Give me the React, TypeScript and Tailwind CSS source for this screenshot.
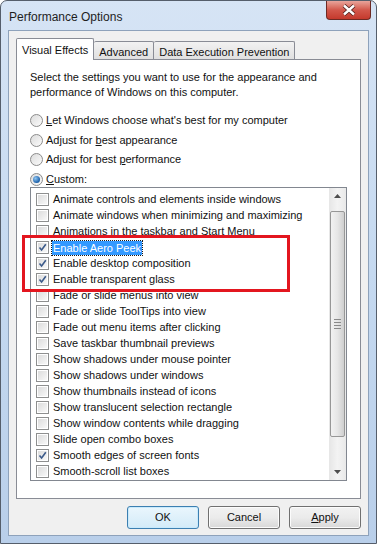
import React from "react";

const FONT = { fontFamily: '"Liberation Sans", Arial, sans-serif' };

const effects: { label: string; checked?: boolean; selected?: boolean }[] = [
  { label: "Animate controls and elements inside windows" },
  { label: "Animate windows when minimizing and maximizing" },
  { label: "Animations in the taskbar and Start Menu" },
  { label: "Enable Aero Peek", checked: true, selected: true },
  { label: "Enable desktop composition", checked: true },
  { label: "Enable transparent glass", checked: true },
  { label: "Fade or slide menus into view" },
  { label: "Fade or slide ToolTips into view" },
  { label: "Fade out menu items after clicking" },
  { label: "Save taskbar thumbnail previews" },
  { label: "Show shadows under mouse pointer" },
  { label: "Show shadows under windows" },
  { label: "Show thumbnails instead of icons" },
  { label: "Show translucent selection rectangle" },
  { label: "Show window contents while dragging" },
  { label: "Slide open combo boxes" },
  { label: "Smooth edges of screen fonts", checked: true },
  { label: "Smooth-scroll list boxes" },
];

function Radio({ on }: { on?: boolean }) {
  return (
    <span className="w-[13px] h-[13px] rounded-full border border-[#8b8b8b] bg-gradient-to-br from-[#dcdcdc] to-[#fbfbfb] flex items-center justify-center shrink-0">
      {on && (
        <span className="w-[7px] h-[7px] rounded-full bg-[radial-gradient(circle_at_35%_35%,#8fc6f3,#1b5fa8_70%)]" />
      )}
    </span>
  );
}

function Check({ on }: { on?: boolean }) {
  return (
    <span className="w-[13px] h-[13px] border border-[#8e8f8f] bg-white p-[1px] shrink-0">
      <span className="block w-full h-full bg-gradient-to-br from-[#dcdcdc] to-[#f8f8f8] relative">
        {on && (
          <svg viewBox="0 0 9 9" className="absolute inset-0 w-[9px] h-[9px]">
            <path d="M1.5 4.5 L3.6 7 L7.8 1.2" fill="none" stroke="#3b5a8a" strokeWidth="1.6" />
          </svg>
        )}
      </span>
    </span>
  );
}

function Btn({ children, primary }: { children: React.ReactNode; primary?: boolean }) {
  return (
    <div
      className={`w-[72px] h-[23px] rounded-[3px] border flex items-center justify-center text-[11px] text-[#111] ${
        primary
          ? "border-[#3c7fb1] bg-gradient-to-b from-[#eaf6fd] to-[#d3ebf8] shadow-[inset_0_0_0_1px_#c9eafc]"
          : "border-[#707070] bg-gradient-to-b from-[#f2f2f2] via-[#ebebeb] to-[#d8d8d8] shadow-[inset_0_0_0_1px_#fcfcfc]"
      }`}
    >
      {children}
    </div>
  );
}

export default function App() {
  return (
    <div className="w-[380px] h-[544px] bg-white" style={FONT}>
      <div className="relative w-[377px] h-[544px] flex flex-col rounded-t-[7px] border border-[#555e6b] bg-gradient-to-b from-[#d6e4f5] via-[#c5d9f0] to-[#b9cfea]">
        {/* Title bar */}
        <div className="h-[29px] flex items-start justify-between pl-[8px] pr-[5px]">
          <span className="mt-[7px] text-[12px] text-[#1e1e1e]">Performance Options</span>
          <div className="w-[45px] h-[19px] rounded-b-[4px] border border-t-0 border-[#6d2a24] bg-gradient-to-b from-[#e8a49b] via-[#d2574b] to-[#c4392c] flex items-center justify-center">
            <svg viewBox="0 0 14 12" className="w-[14px] h-[12px]">
              <path d="M2 1.5 L12 10.5 M12 1.5 L2 10.5" stroke="#4a1c18" strokeWidth="4" />
              <path d="M2 1.5 L12 10.5 M12 1.5 L2 10.5" stroke="#ffffff" strokeWidth="2.4" />
            </svg>
          </div>
        </div>

        {/* Client */}
        <div className="flex-1 mx-[7px] mb-[7px] bg-[#f0f0f0] border border-[#8ea2bb] px-[7px] pt-[7px] flex flex-col">
          {/* Tabs */}
          <div className="flex items-end h-[21px] text-[11px] text-[#111] relative z-10">
            <div className="h-[22px] -mb-px px-[5px] pt-[3px] bg-white border border-b-0 border-[#898c95] rounded-t-[2px]">
              Visual Effects
            </div>
            <div className="h-[18px] px-[5px] pt-[2px] bg-gradient-to-b from-[#f2f2f2] to-[#e0e0e0] border border-l-0 border-b-0 border-[#898c95] rounded-t-[2px]">
              Advanced
            </div>
            <div className="h-[18px] px-[5px] pt-[2px] bg-gradient-to-b from-[#f2f2f2] to-[#e0e0e0] border border-l-0 border-b-0 border-[#898c95] rounded-t-[2px]">
              Data Execution Prevention
            </div>
          </div>

          {/* Panel */}
          <div className="h-[440px] bg-white border border-[#898c95] px-[13px] pt-[10px] text-[11px] text-[#111]">
            <p className="leading-[15px]">
              Select the settings you want to use for the appearance and
              <br />
              performance of Windows on this computer.
            </p>

            <div className="mt-[14px] flex flex-col gap-[6.5px]">
              <label className="flex items-center gap-[3px] h-[13px]">
                <Radio />
                <span>
                  <u>L</u>et Windows choose what's best for my computer
                </span>
              </label>
              <label className="flex items-center gap-[3px] h-[13px]">
                <Radio />
                <span>
                  Adjust for <u>b</u>est appearance
                </span>
              </label>
              <label className="flex items-center gap-[3px] h-[13px]">
                <Radio />
                <span>
                  Adjust for best <u>p</u>erformance
                </span>
              </label>
              <label className="flex items-center gap-[3px] h-[13px]">
                <Radio on />
                <span>
                  <u>C</u>ustom:
                </span>
              </label>
            </div>

            {/* List */}
            <div className="mt-[1px] h-[294px] border border-[#828790] flex">
              <div className="flex-1 pt-[4px] pl-[5px]">
                {effects.map((e) => (
                  <div key={e.label} className="h-[16px] flex items-center gap-[3px]">
                    <Check on={e.checked} />
                    <span
                      className={
                        e.selected
                          ? "px-[1px] leading-[14px] bg-[#3399ff] text-white outline-1 outline-dotted outline-[#1a1a1a]"
                          : "px-[1px]"
                      }
                    >
                      {e.label}
                    </span>
                  </div>
                ))}
              </div>

              {/* Scrollbar */}
              <div className="w-[17px] bg-gradient-to-r from-[#e6e6e6] via-[#f3f3f3] to-[#e9e9e9] flex flex-col">
                <div className="h-[17px] flex items-center justify-center">
                  <svg viewBox="0 0 7 4" className="w-[7px] h-[4px]">
                    <path d="M0 4 L3.5 0 L7 4 Z" fill="#4d4d4d" />
                  </svg>
                </div>
                <div className="mt-[6px] h-[226px] mx-[1px] rounded-[2px] border border-[#979797] bg-gradient-to-r from-[#f2f2f2] via-[#e6e6e6] to-[#cfcfcf] flex flex-col items-center justify-center gap-[2px]">
                  <span className="w-[7px] h-px bg-[#8a8a8a]" />
                  <span className="w-[7px] h-px bg-[#8a8a8a]" />
                  <span className="w-[7px] h-px bg-[#8a8a8a]" />
                  <span className="w-[7px] h-px bg-[#8a8a8a]" />
                </div>
                <div className="flex-1 flex items-end justify-center pb-[6px]">
                  <svg viewBox="0 0 7 4" className="w-[7px] h-[4px]">
                    <path d="M0 0 L7 0 L3.5 4 Z" fill="#4d4d4d" />
                  </svg>
                </div>
              </div>
            </div>
          </div>

          {/* Buttons */}
          <div className="mt-[7px] flex justify-end gap-[9px]">
            <Btn primary>OK</Btn>
            <Btn>Cancel</Btn>
            <Btn>
              <u>A</u>pply
            </Btn>
          </div>
        </div>

        {/* Annotation */}
        <div className="absolute left-[21px] top-[234px] w-[268px] h-[57px] border-[3px] border-[#e3161f] pointer-events-none" />
      </div>
    </div>
  );
}
